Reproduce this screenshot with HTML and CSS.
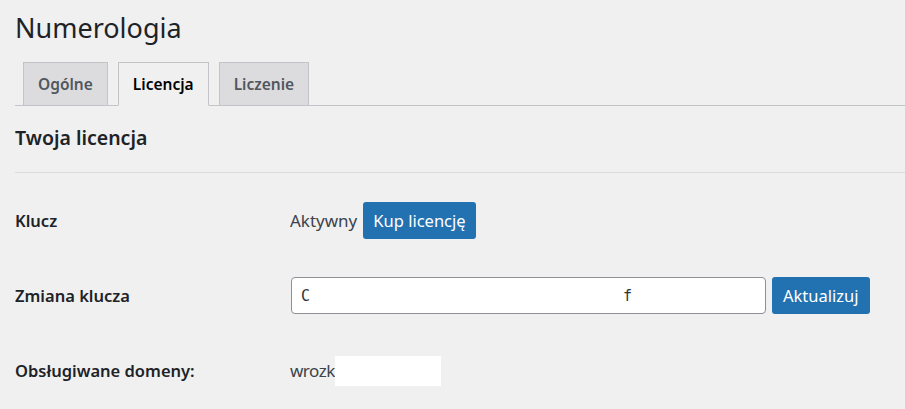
FILE: index.html
```html
<!DOCTYPE html>
<html lang="pl">
<head>
<meta charset="utf-8">
<title>Numerologia</title>
<link rel="stylesheet" href="styles.css">
</head>
<body>
<div class="wrap">
  <h1 class="page-title">Numerologia</h1>
  <nav class="tabs">
    <a class="tab">Ogólne</a>
    <a class="tab tab-active">Licencja</a>
    <a class="tab">Liczenie</a>
  </nav>
  <h2 class="section-title">Twoja licencja</h2>
  <div class="form">
    <div class="row">
      <div class="label">Klucz</div>
      <div class="field">
        <span class="status">Aktywny</span>
        <button class="btn">Kup licencję</button>
      </div>
    </div>
    <div class="row">
      <div class="label">Zmiana klucza</div>
      <div class="field">
        <div class="input"><span class="ch">C</span><span class="ch ch-f">f</span></div>
        <button class="btn btn-update">Aktualizuj</button>
      </div>
    </div>
    <div class="row">
      <div class="label">Obsługiwane domeny:</div>
      <div class="field">
        <span class="status status-domain">wrozk</span><span class="mask"></span>
      </div>
    </div>
  </div>
</div>
</body>
</html>
```

FILE: styles.css
```css
html, body {
  margin: 0;
  padding: 0;
  background: #f0f0f1;
}
body {
  font-family: "Noto Sans", "Open Sans", sans-serif;
  color: #3c434a;
  font-size: 17px;
}
.wrap {
  padding-left: 15px;
}
.page-title {
  margin: 0;
  padding-top: 10px;
  font-size: 27px;
  font-weight: 400;
  line-height: 36px;
  color: #1d2327;
}
.tabs {
  display: flex;
  gap: 10px;
  margin-top: 16px;
  padding-left: 8px;
  border-bottom: 1px solid #c3c4c7;
  height: 43px;
}
.tab {
  display: flex;
  align-items: center;
  justify-content: center;
  box-sizing: border-box;
  height: 44px;
  padding: 0 14px;
  background: #dcdcde;
  border: 1px solid #c3c4c7;
  color: #50575e;
  font-weight: 600;
  font-size: 15.5px;
}
.tab-active {
  background: #f0f0f1;
  border-bottom-color: #f0f0f1;
  color: #000;
}
.section-title {
  margin: 0;
  padding: 18px 0 20px;
  font-size: 19.5px;
  font-weight: 600;
  line-height: 28px;
  color: #1d2327;
  border-bottom: 1px solid #dcdcde;
}
.form {
  padding-top: 10px;
}
.row {
  display: flex;
  align-items: center;
  height: 75px;
}
.label {
  width: 275px;
  flex-shrink: 0;
  font-weight: 600;
  font-size: 16.5px;
  color: #1d2327;
}
.field {
  display: flex;
  align-items: center;
}
.status {
  color: #3c434a;
}
.status-domain {
  letter-spacing: -0.5px;
}
.btn {
  margin-left: 6px;
  height: 37px;
  padding: 0 10px;
  border: none;
  border-radius: 3px;
  background: #2271b1;
  color: #fff;
  font-family: inherit;
  font-size: 16.5px;
}
.input {
  display: flex;
  align-items: center;
  box-sizing: border-box;
  width: 475px;
  height: 37px;
  margin-left: 1px;
  padding-left: 9px;
  background: #fff;
  border: 1px solid #8c8f94;
  border-radius: 4px;
  font-family: "DejaVu Sans Mono", monospace;
  font-size: 15px;
  color: #2c3338;
}
.ch-f {
  margin-left: 313px;
}
.btn-update {
  margin-left: 6px;
  padding: 0 11px;
}
.mask {
  display: inline-block;
  width: 106px;
  height: 30px;
  background: #fff;
}
```
